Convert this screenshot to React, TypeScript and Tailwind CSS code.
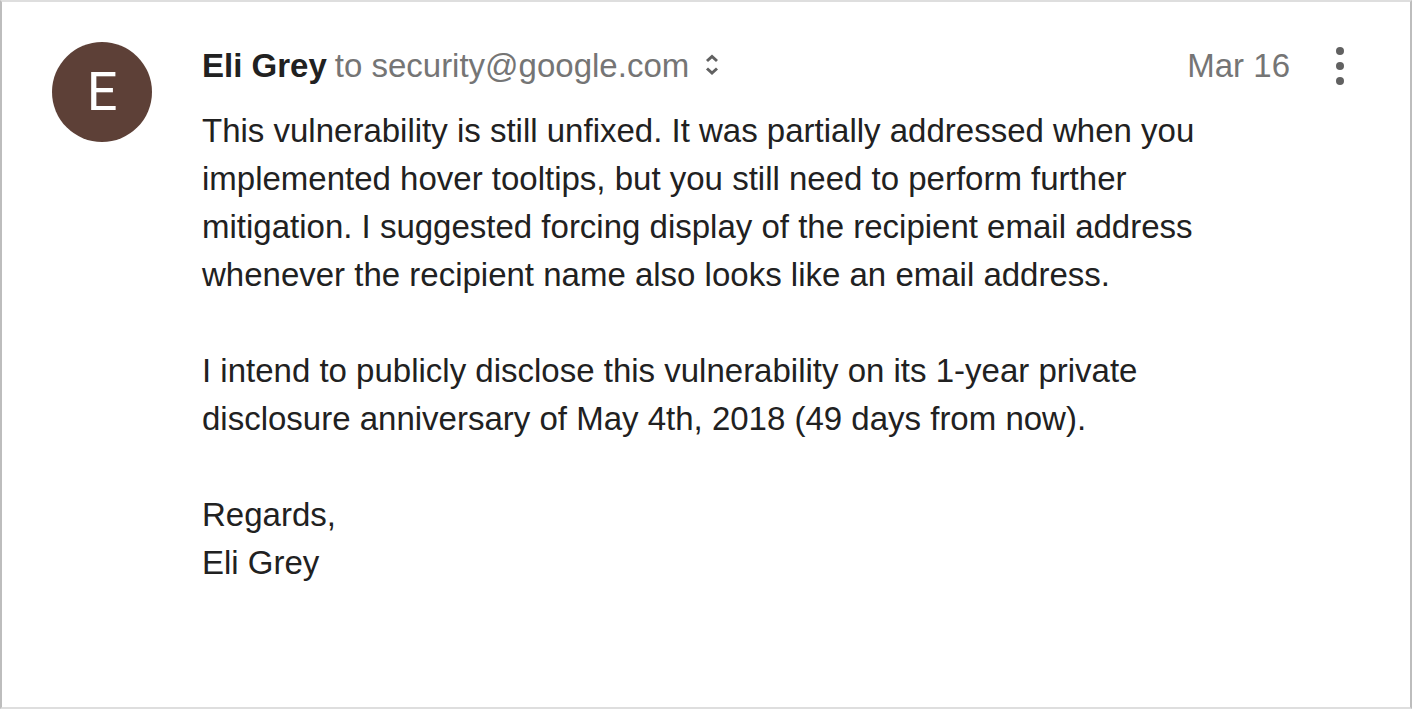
const paragraphs = [
  "This vulnerability is still unfixed. It was partially addressed when you implemented hover tooltips, but you still need to perform further mitigation. I suggested forcing display of the recipient email address whenever the recipient name also looks like an email address.",
  "I intend to publicly disclose this vulnerability on its 1-year private disclosure anniversary of May 4th, 2018 (49 days from now).",
];

function Avatar() {
  return (
    <div className="flex size-[100px] shrink-0 items-center justify-center rounded-full bg-[#5d4037] font-[Roboto,sans-serif] text-[54px] leading-none text-white">
      E
    </div>
  );
}

export default function App() {
  return (
    <main className="min-h-screen border-2 border-x-[#bdbdbd] border-y-[#dedede] bg-white px-[50px] pt-10 pb-10 font-['Liberation_Sans',Arial,sans-serif] text-[33px] leading-[48px] text-[#212121]">
      <article className="flex gap-[50px]">
        <Avatar />
        <div className="min-w-0 grow">
          <header className="flex items-center text-[#757575]">
            <h1 className="font-bold text-[#212121]">Eli Grey</h1>
            <button type="button" aria-label="Show recipients" className="ml-2 flex items-center gap-4">
              <span>to security@google.com</span>
              <svg viewBox="0 0 14 24" className="h-6 w-[14px]" fill="none" stroke="#616161" strokeWidth="3">
                <path d="M2 7 L7 2.5 L12 7 M2 14.5 L7 19 L12 14.5" />
              </svg>
            </button>
            <time dateTime="2018-03-16" className="ml-auto">Mar 16</time>
            <button type="button" aria-label="More options" className="ml-[45px] mr-[15px] text-[#616161]">
              <svg viewBox="0 0 10 40" className="h-10 w-[10px]" fill="currentColor">
                <circle cx="5" cy="5" r="4" />
                <circle cx="5" cy="20" r="4" />
                <circle cx="5" cy="35" r="4" />
              </svg>
            </button>
          </header>
          <div className="mt-[17px] flex max-w-[1000px] flex-col gap-12">
            {paragraphs.map((text) => (
              <p key={text}>{text}</p>
            ))}
            <p>
              Regards,
              <br />
              Eli Grey
            </p>
          </div>
        </div>
      </article>
    </main>
  );
}
